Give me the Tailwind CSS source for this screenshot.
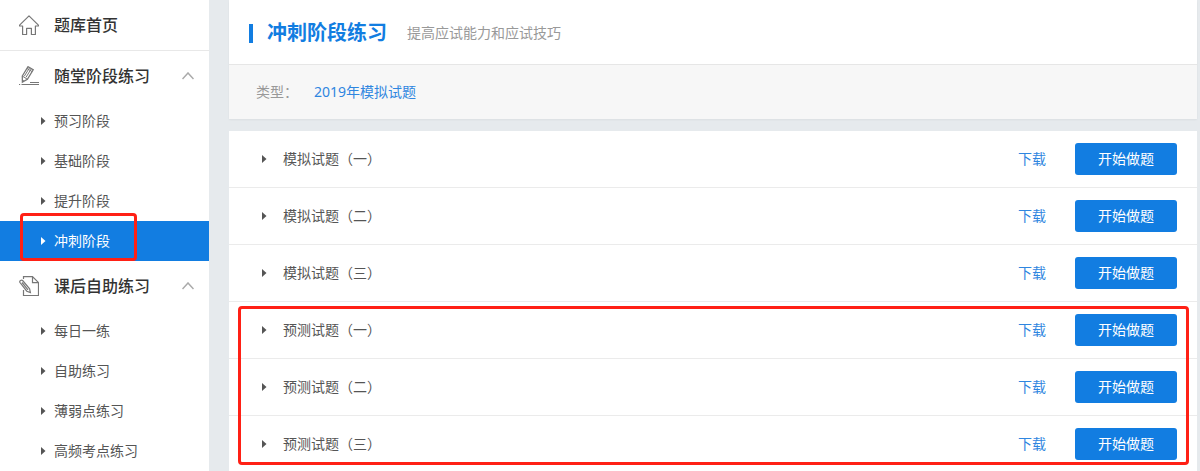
<!DOCTYPE html>
<html lang="zh-CN">
<head>
  <meta charset="UTF-8">
  <title>冲刺阶段练习</title>
  <meta name="viewport" content="width=device-width, initial-scale=1">
  <script src="https://cdn.jsdelivr.net/npm/@tailwindcss/browser@4"></script>
</head>
<body class="bg-[#e6eaed] text-sm text-[#555] font-['Noto_Sans','Noto_Sans_CJK_SC',sans-serif]">
  <div class="flex h-screen gap-5 overflow-hidden pr-[3px]">

    <!-- sidebar -->
    <nav class="w-[209px] shrink-0 bg-white">
      <a href="#" class="flex h-[51px] items-center border-b border-[#e8e8e8] pl-[19px] text-base font-medium text-[#333]">
        <svg class="mr-[15px] h-5 w-5" viewBox="0 0 20 20" fill="none" stroke="#777" stroke-width="1.2" stroke-linejoin="round">
          <path d="M10 .8 .6 10.2v.8h3v8.5h4v-6.2h4.8v6.2h4V11h3v-.8z"/>
        </svg>
        题库首页
      </a>

      <button type="button" class="flex h-[50px] w-full items-center pl-[19px] pr-[15px] text-base font-medium text-[#333]">
        <svg class="mr-[15px] h-5 w-5" viewBox="0 0 20 20" fill="none" stroke="#777">
          <path d="M3.3 10 9 .7l5.2 3.1-5.8 9.5-5 2.8z" stroke-width="1.3"/>
          <path d="m3.3 10 5.1 3.3M5.3 10.2 10.6 1.7M7 11.3l5.4-8.7M8 2.5l5.1 3.1M3.4 14l1.6 1.1"/>
          <path d="M0 18.5h1.2M2.5 18.5H20M11 16.5h9" stroke-width="1.2"/>
        </svg>
        随堂阶段练习
        <svg class="ml-auto h-2 w-3" viewBox="0 0 12 8" fill="none" stroke="#aaa" stroke-width="1.5"><path d="m.5 7 5.5-6 5.5 6"/></svg>
      </button>
      <ul>
        <li><a href="#" class="flex h-10 items-center gap-2 pl-[41px]"><svg class="h-2 w-[5px]" viewBox="0 0 5 8" fill="#555"><path d="M0 0v8l4.5-4z"/></svg>预习阶段</a></li>
        <li><a href="#" class="flex h-10 items-center gap-2 pl-[41px]"><svg class="h-2 w-[5px]" viewBox="0 0 5 8" fill="#555"><path d="M0 0v8l4.5-4z"/></svg>基础阶段</a></li>
        <li><a href="#" class="flex h-10 items-center gap-2 pl-[41px]"><svg class="h-2 w-[5px]" viewBox="0 0 5 8" fill="#555"><path d="M0 0v8l4.5-4z"/></svg>提升阶段</a></li>
        <li class="relative">
          <a href="#" class="flex h-10 items-center gap-2 bg-[#127de1] pl-[41px] text-white"><svg class="h-2 w-[5px]" viewBox="0 0 5 8" fill="#fff"><path d="M0 0v8l4.5-4z"/></svg>冲刺阶段</a>
          <div class="pointer-events-none absolute -top-2 bottom-0 left-5 w-[117px] rounded border-3 border-[#ff2015]"></div>
        </li>
      </ul>

      <button type="button" class="flex h-[50px] w-full items-center pl-[19px] pr-[15px] text-base font-medium text-[#333]">
        <svg class="mr-[15px] h-5 w-5" viewBox="0 0 20 20" fill="none" stroke="#777" stroke-width="1.2">
          <path d="M4.5 3V.6h9l6 6v12.9h-15V14M13.5.6v6h6"/>
          <path d="M.8 6.3c-.5-1.4 1.6-3 2.8-1.8l7 8.3.8 3.8-3.6-1.4zM3 6.5l6 7.3"/>
        </svg>
        课后自助练习
        <svg class="ml-auto h-2 w-3" viewBox="0 0 12 8" fill="none" stroke="#aaa" stroke-width="1.5"><path d="m.5 7 5.5-6 5.5 6"/></svg>
      </button>
      <ul>
        <li><a href="#" class="flex h-10 items-center gap-2 pl-[41px]"><svg class="h-2 w-[5px]" viewBox="0 0 5 8" fill="#555"><path d="M0 0v8l4.5-4z"/></svg>每日一练</a></li>
        <li><a href="#" class="flex h-10 items-center gap-2 pl-[41px]"><svg class="h-2 w-[5px]" viewBox="0 0 5 8" fill="#555"><path d="M0 0v8l4.5-4z"/></svg>自助练习</a></li>
        <li><a href="#" class="flex h-10 items-center gap-2 pl-[41px]"><svg class="h-2 w-[5px]" viewBox="0 0 5 8" fill="#555"><path d="M0 0v8l4.5-4z"/></svg>薄弱点练习</a></li>
        <li><a href="#" class="flex h-10 items-center gap-2 pl-[41px]"><svg class="h-2 w-[5px]" viewBox="0 0 5 8" fill="#555"><path d="M0 0v8l4.5-4z"/></svg>高频考点练习</a></li>
      </ul>
    </nav>

    <main class="min-w-0 flex-1">
      <section class="mb-3 bg-white shadow-xs">
        <header class="flex h-[65px] items-center border-b border-[#e6e6e6] pl-5 pt-[2px]">
          <span class="mr-[14px] h-[19px] w-1 bg-[#127de1]"></span>
          <h1 class="mr-5 text-xl font-bold text-[#127de1]">冲刺阶段练习</h1>
          <p class="text-[#999]">提高应试能力和应试技巧</p>
        </header>
        <div class="flex h-[54px] items-center bg-[#f7f7f7] pl-[27px]">
          <span class="mr-4 text-[#999]">类型：</span>
          <a href="#" class="text-[#2f86e0]">2019年模拟试题</a>
        </div>
      </section>

      <section class="bg-white">
        <ul>
          <li class="flex h-[57px] items-center border-b border-[#ebebeb] pl-[33px] pr-5">
            <svg class="mr-4 h-2 w-[5px]" viewBox="0 0 5 8" fill="#555"><path d="M0 0v8l4.5-4z"/></svg>
            <span class="flex-1">模拟试题（一）</span>
            <a href="#" class="mr-[29px] text-[#2f86e0]">下载</a>
            <button type="button" class="h-8 w-[102px] rounded-[3px] bg-[#127de1] text-white">开始做题</button>
          </li>
          <li class="flex h-[57px] items-center border-b border-[#ebebeb] pl-[33px] pr-5">
            <svg class="mr-4 h-2 w-[5px]" viewBox="0 0 5 8" fill="#555"><path d="M0 0v8l4.5-4z"/></svg>
            <span class="flex-1">模拟试题（二）</span>
            <a href="#" class="mr-[29px] text-[#2f86e0]">下载</a>
            <button type="button" class="h-8 w-[102px] rounded-[3px] bg-[#127de1] text-white">开始做题</button>
          </li>
          <li class="flex h-[57px] items-center border-b border-[#ebebeb] pl-[33px] pr-5">
            <svg class="mr-4 h-2 w-[5px]" viewBox="0 0 5 8" fill="#555"><path d="M0 0v8l4.5-4z"/></svg>
            <span class="flex-1">模拟试题（三）</span>
            <a href="#" class="mr-[29px] text-[#2f86e0]">下载</a>
            <button type="button" class="h-8 w-[102px] rounded-[3px] bg-[#127de1] text-white">开始做题</button>
          </li>
        </ul>
        <div class="relative">
          <ul>
            <li class="flex h-[57px] items-center border-b border-[#ebebeb] pl-[33px] pr-5">
              <svg class="mr-4 h-2 w-[5px]" viewBox="0 0 5 8" fill="#555"><path d="M0 0v8l4.5-4z"/></svg>
              <span class="flex-1">预测试题（一）</span>
              <a href="#" class="mr-[29px] text-[#2f86e0]">下载</a>
              <button type="button" class="h-8 w-[102px] rounded-[3px] bg-[#127de1] text-white">开始做题</button>
            </li>
            <li class="flex h-[57px] items-center border-b border-[#ebebeb] pl-[33px] pr-5">
              <svg class="mr-4 h-2 w-[5px]" viewBox="0 0 5 8" fill="#555"><path d="M0 0v8l4.5-4z"/></svg>
              <span class="flex-1">预测试题（二）</span>
              <a href="#" class="mr-[29px] text-[#2f86e0]">下载</a>
              <button type="button" class="h-8 w-[102px] rounded-[3px] bg-[#127de1] text-white">开始做题</button>
            </li>
            <li class="flex h-[57px] items-center border-b border-[#ebebeb] pl-[33px] pr-5">
              <svg class="mr-4 h-2 w-[5px]" viewBox="0 0 5 8" fill="#555"><path d="M0 0v8l4.5-4z"/></svg>
              <span class="flex-1">预测试题（三）</span>
              <a href="#" class="mr-[29px] text-[#2f86e0]">下载</a>
              <button type="button" class="h-8 w-[102px] rounded-[3px] bg-[#127de1] text-white">开始做题</button>
            </li>
          </ul>
          <!-- highlight around the three prediction papers -->
          <div class="pointer-events-none absolute right-2 left-[9px] top-1 bottom-2 rounded border-3 border-[#ff2015]"></div>
        </div>
      </section>
    </main>
  </div>
</body>
</html>
